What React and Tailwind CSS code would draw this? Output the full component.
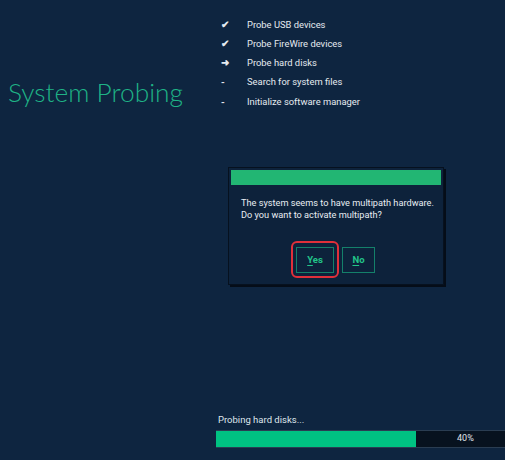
import React from "react";

const steps = [
  { mark: "✔", label: "Probe USB devices" },
  { mark: "✔", label: "Probe FireWire devices" },
  { mark: "➜", label: "Probe hard disks" },
  { mark: "-", label: "Search for system files" },
  { mark: "-", label: "Initialize software manager" },
];

const App = () => {
  const progress = 40;

  return (
    <div
      className="w-[505px] h-[460px] bg-[#0e2540] flex overflow-hidden text-[#e6ebf0]"
      style={{ fontFamily: "Roboto, 'Liberation Sans', sans-serif" }}
    >
      {/* Title column */}
      <div className="w-[216px] shrink-0 pt-[76px] pl-[8px]">
        <h1
          className="text-[26.3px] leading-[32px] font-light text-[#1fb386] whitespace-nowrap"
          style={{ fontFamily: "Lato, 'Open Sans', sans-serif" }}
        >
          System Probing
        </h1>
      </div>

      {/* Main column */}
      <div className="flex-1 flex flex-col">
        {/* Step list */}
        <ul className="pt-[15px] pl-[5px]">
          {steps.map((step) => (
            <li key={step.label} className="flex items-center h-[19.3px] text-[9.4px]">
              <span className="w-[26px] text-[9.5px] font-bold">{step.mark}</span>
              <span>{step.label}</span>
            </li>
          ))}
        </ul>

        {/* Multipath dialog */}
        <div className="ml-[12px] mt-[56px] w-[216px] h-[118px] bg-[#0d223b] border border-[#06111f] shadow-[2px_2px_0_#050d18] p-[2px] flex flex-col">
          <div className="h-[15px] bg-[#22b673]" />
          <p className="mt-[12px] px-[10px] text-[9.2px] leading-[12px] text-[#e8edf2] whitespace-nowrap">
            The system seems to have multipath hardware.
            <br />
            Do you want to activate multipath?
          </p>
          <div className="mt-auto mb-[4px] flex justify-center items-center gap-[3px] pr-[6px]">
            <div className="rounded-[6px] border-2 border-[#e0303a] p-[3px]">
              <button className="w-[38px] h-[26px] border border-[#14806a] text-[#22c489] text-[9.5px] font-bold">
                <span className="underline underline-offset-2">Y</span>es
              </button>
            </div>
            <button className="w-[33px] h-[26px] border border-[#14806a] text-[#22c489] text-[9.5px] font-bold">
              <span className="underline underline-offset-2">N</span>o
            </button>
          </div>
        </div>

        {/* Progress */}
        <div className="mt-auto mb-[12px]">
          <div className="pl-[2px] text-[9.5px] leading-[12px] mb-[4px] text-[#dfe5ec]">
            Probing hard disks...
          </div>
          <div className="relative h-[18px] bg-[#07121f] border-y border-[#2a3d52] flex">
            <div className="h-full bg-[#00c282]" style={{ width: `${(progress / 40) * 200}px` }} />
            <span className="absolute left-[241px] top-0 h-full flex items-center text-[9px] text-[#e0e6ec]">
              {progress}%
            </span>
          </div>
        </div>
      </div>
    </div>
  );
};

export default App;
